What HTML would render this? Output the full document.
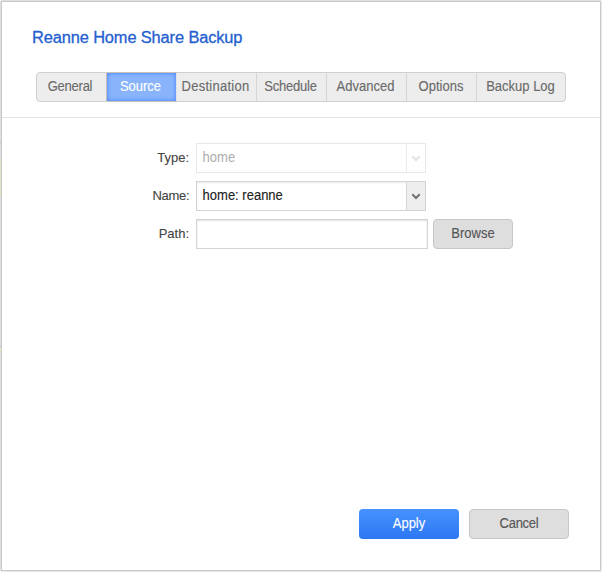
<!DOCTYPE html>
<html>
<head>
<meta charset="utf-8">
<title>Reanne Home Share Backup</title>
<style>
html,body{margin:0;padding:0;}
body{width:602px;height:573px;background:#fff;overflow:hidden;position:relative;
  font-family:"Liberation Sans",sans-serif;font-size:13px;color:#444;}
*{box-sizing:border-box;}
.shadow{position:absolute;left:0;top:0;width:602px;height:572px;background:#dfdfdf;border-radius:2px;border-right:1px solid #e9e9e9;border-bottom:1px solid #e7e7e7;}
.dialog{position:absolute;left:1px;top:1px;width:600px;height:570px;background:#fff;border:1px solid #c9c9c9;border-radius:1px;}
.title{position:absolute;left:32px;top:26px;font-size:16.4px;line-height:22px;color:#2460cf;white-space:nowrap;letter-spacing:-0.12px;transform:scaleY(1.04);transform-origin:0 72%;-webkit-text-stroke:0.3px #2460cf;}
.tabs{position:absolute;left:36px;top:72px;width:530px;height:30px;border:1px solid #cfcfcf;border-radius:4px;background:#ededed;}
.tab{position:absolute;top:0;height:28px;line-height:27px;text-align:center;color:#6a6a6a;border-right:1px solid #d6d6d6;font-size:13px;}
.tab.last{border-right:none;}
.tab.active{background:#89b4fc;color:#fff;border-right-color:#dfe3ea;box-shadow:inset 0 0 4px 0 #3f7dfa,0 -1px 0 #c7c1b9,0 1px 0 #c7c1b9;}
.tab.pre{border-right-color:#c4c0ba;}
.hr{position:absolute;left:2px;top:117px;width:598px;height:1px;background:#e4e4e4;}
.label{position:absolute;left:100px;width:89px;text-align:right;height:30px;line-height:30px;color:#444;}
.field{position:absolute;left:196px;height:30px;border:1px solid #d4d4d4;background:#fff;line-height:28px;padding-left:5.6px;color:#222;box-shadow:inset 0 1px 2px rgba(0,0,0,.09);}
.field.disabled{border-color:#e8e8e8;color:#adadad;box-shadow:none;}
.field.disabled .t{-webkit-text-stroke:0;}
.arrow{position:absolute;right:0;top:0;width:19px;height:28px;border-left:1px solid #d6d6d6;background:#eee;}
.field.disabled .arrow{border-left-color:#eaeaea;background:#fff;}
.arrow svg{position:absolute;left:0;top:0;}
.input{box-shadow:inset 0 1px 2px rgba(0,0,0,.12);}
.btn{position:absolute;height:30px;line-height:28px;text-align:center;border-radius:4px;font-size:13px;}
.btn.grey{background:#dedede;border:1px solid #c6c6c6;color:#555;}
.btn.blue{background:linear-gradient(#4792ff,#2d78f2);color:#fff;border:none;line-height:30px;}
.t{display:inline-block;transform:scaleY(1.1);transform-origin:0 66%;-webkit-text-stroke:0.12px currentColor;}
.label .t{transform:none;}
.art{position:absolute;left:0;width:1px;}
</style>
</head>
<body>
<div class="shadow"></div>
<div class="art" style="top:142px;height:1px;background:#b8bcd8"></div>
<div class="art" style="top:158px;height:38px;background:#e2e2c6"></div>
<div class="art" style="top:346px;height:1px;background:#b8bcd8"></div>
<div class="art" style="top:347px;height:7px;background:#e6e4cc"></div>
<div class="dialog"></div>

<div class="title">Reanne Home Share Backup</div>

<div class="tabs">
  <div class="tab pre" style="left:0;width:70px;padding-right:3px;"><span class="t" style="letter-spacing:-0.25px">General</span></div>
  <div class="tab active" style="left:70px;width:70px;padding-right:2px;"><span class="t">Source</span></div>
  <div class="tab" style="left:140px;width:80px;padding-right:2px;"><span class="t" style="letter-spacing:0.25px">Destination</span></div>
  <div class="tab" style="left:220px;width:70px;padding-right:2px;"><span class="t" style="letter-spacing:-0.2px">Schedule</span></div>
  <div class="tab" style="left:290px;width:80px;padding-right:2px;"><span class="t">Advanced</span></div>
  <div class="tab" style="left:370px;width:70px;padding-right:1px;"><span class="t">Options</span></div>
  <div class="tab last" style="left:440px;width:88px;padding-right:1px;"><span class="t">Backup Log</span></div>
</div>

<div class="hr"></div>

<div class="label" style="top:143px;"><span class="t">Type:</span></div>
<div class="field disabled" style="top:143px;width:230px;"><span class="t">home</span>
  <div class="arrow"><svg width="18" height="28" viewBox="0 0 18 28"><path d="M6 13 L9 16 L12 13" fill="none" stroke="#e3e3e3" stroke-width="2" stroke-linecap="square" stroke-linejoin="miter"/></svg></div>
</div>

<div class="label" style="top:181px;"><span class="t" style="letter-spacing:-0.3px;margin-right:-0.3px">Name:</span></div>
<div class="field" style="top:181px;width:230px;"><span class="t">home: reanne</span>
  <div class="arrow"><svg width="18" height="28" viewBox="0 0 18 28"><path d="M6 13 L9 16 L12 13" fill="none" stroke="#707070" stroke-width="2" stroke-linecap="square" stroke-linejoin="miter"/></svg></div>
</div>

<div class="label" style="top:219px;"><span class="t">Path:</span></div>
<div class="field input" style="top:219px;width:232px;"></div>
<div class="btn grey" style="left:433px;top:219px;width:80px;"><span class="t">Browse</span></div>

<div class="btn blue" style="left:359px;top:509px;width:100px;"><span class="t">Apply</span></div>
<div class="btn grey" style="left:469px;top:509px;width:100px;"><span class="t" style="letter-spacing:-0.25px">Cancel</span></div>
</body>
</html>
